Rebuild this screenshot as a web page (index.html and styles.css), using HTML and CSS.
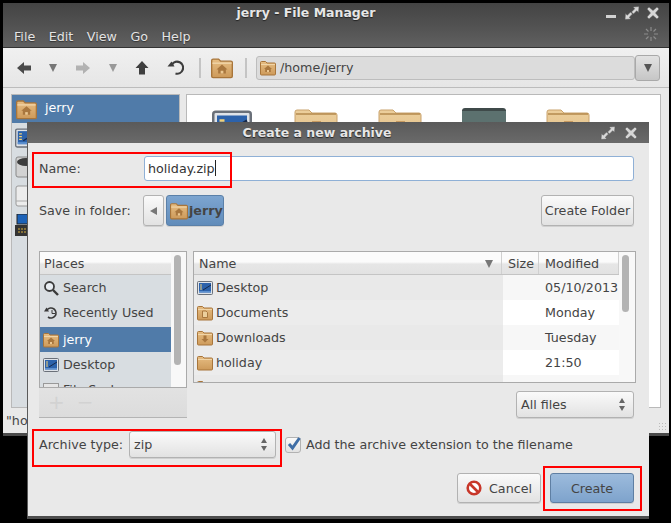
FILE: index.html
```html
<!DOCTYPE html>
<html lang="en">
<head>
    <meta charset="UTF-8">
    <meta name="viewport" content="width=device-width, initial-scale=1.0">
    <title>Create a new archive</title>
    <link rel="stylesheet" href="styles.css">
</head>
<body>
    <svg class="defs" width="0" height="0">
        <defs>
            <linearGradient id="tan" x1="0" y1="0" x2="0" y2="1">
                <stop offset="0" stop-color="#e6bd83"/>
                <stop offset="1" stop-color="#cd9a5a"/>
            </linearGradient>
            <linearGradient id="pale" x1="0" y1="0" x2="0" y2="1">
                <stop offset="0" stop-color="#eccf9c"/>
                <stop offset="1" stop-color="#e0bb84"/>
            </linearGradient>
            <symbol id="folder" viewBox="0 0 16 16">
                <path d="M.5 14V2.500q0-1 1-1h4l1.500 1.500h7.500q1 0 1 1V14q0 1-1 1h-13q-1 0-1-1z" fill="url(#tan)" stroke="#a8753a"/>
                <path d="M1 4.500h14" stroke="#f0d5a8"/>
            </symbol>
            <symbol id="folder-big" viewBox="0 0 44 40">
                <path d="M1 38V4q0-2 2-2h12l3 3h23q2 0 2 2v31q0 1-2 1H3q-2 0-2-1z" fill="url(#pale)" stroke="#c9a26c"/>
                <path d="M2 6h40" stroke="#b58a4e" stroke-width="1.500"/>
                <path d="M18 13h9v6h-9z" fill="#c79a60"/>
            </symbol>
            <symbol id="folder-home" viewBox="0 0 16 16">
                <use href="#folder"/>
                <path d="M8 5.500l4 3.500h-1.200v3H5.200V9H4z" fill="#a9773e"/>
                <path d="M7 10h2v2H7z" fill="#ecc892"/>
            </symbol>
            <symbol id="folder-doc" viewBox="0 0 16 16">
                <use href="#folder"/>
                <path d="M5.500 6h3.500l1.500 1.500V12.500h-5z" fill="#eccf9c" stroke="#a9773e"/>
            </symbol>
            <symbol id="folder-down" viewBox="0 0 16 16">
                <use href="#folder"/>
                <path d="M6.500 5.500h3V9H11.500L8 12.500 4.500 9h2z" fill="#a9773e"/>
            </symbol>
            <symbol id="desktop" viewBox="0 0 16 16">
                <rect x=".5" y="1.500" width="15" height="13" rx="1" fill="#dfe3e8" stroke="#6a7079"/>
                <rect x="2" y="3" width="12" height="9.500" fill="#2c62ab"/>
                <path d="M3 5h2M3 7h2M3 9h2" stroke="#f0d078"/>
                <path d="M6 10l8-5" stroke="#16294a"/>
                <path d="M2 11h12v1.500H2z" fill="#5b8fcf"/>
            </symbol>
            <symbol id="arrow" viewBox="0 0 16 16">
                <path d="M1 8l7-6v3.500h7v5H8V14z" fill="#4a4a4a"/>
            </symbol>
            <symbol id="expand" viewBox="0 0 16 14">
                <path d="M9 1l6-.500-.500 6-1.800-1.800L9.500 8 7.500 6l3.200-3.200zM7 13l-6 .500.500-6 1.800 1.800L6.500 6l2 2-3.200 3.200z" fill="#d8d8d8" stroke="#555" stroke-width=".5"/>
            </symbol>
            <symbol id="close" viewBox="0 0 14 14">
                <path d="M3 1l4 3.500L11 1l2 2-3.500 4L13 11l-2 2-4-3.500L3 13l-2-2 3.500-4L1 3z" fill="#d6d6d6" stroke="#555" stroke-width=".5"/>
            </symbol>
        </defs>
    </svg>

    <!-- file manager behind the dialog -->
    <div class="window main-window">
        <div class="titlebar main-title">
            <span class="title">jerry - File Manager</span>
            <div class="win-buttons">
                <span class="minimize"></span>
                <svg class="win-expand" width="16" height="14"><use href="#expand"/></svg>
                <svg class="win-close" width="14" height="14"><use href="#close"/></svg>
            </div>
        </div>
        <div class="menubar">
            <span>File</span><span>Edit</span><span>View</span><span>Go</span><span>Help</span>
            <svg class="spinner" width="14" height="14" viewBox="0 0 14 14"><path d="M7 0v4M7 10v4M0 7h4M10 7h4M2 2l2.500 2.500M9.500 9.500L12 12M12 2L9.500 4.500M4.500 9.500L2 12" stroke="#8c8c8c" stroke-width="1.200"/></svg>
        </div>
        <div class="toolbar">
            <svg class="tool-back" width="16" height="16"><use href="#arrow"/></svg>
            <span class="tri tool-drop1"></span>
            <svg class="tool-forward" width="16" height="16"><use href="#arrow"/></svg>
            <span class="tri tool-drop2"></span>
            <svg class="tool-up" width="14" height="16" viewBox="0 0 14 16"><path d="M7 1l6.500 7H10v6.500H4V8H.5z" fill="#3f3f3f"/></svg>
            <svg class="tool-reload" width="17" height="17" viewBox="0 0 17 17"><path d="M5 5.500A6 6 0 1 1 8.500 14.500" fill="none" stroke="#3d3d3d" stroke-width="2.200"/><path d="M0.500 7.500h7L4.500 2.500z" fill="#3d3d3d"/></svg>
            <span class="tool-sep sep-a"></span>
            <svg class="tool-home" width="22" height="22"><use href="#folder-home"/></svg>
            <span class="tool-sep sep-b"></span>
            <div class="path-entry">
                <svg width="16" height="16"><use href="#folder-home"/></svg>
                <span>/home/jerry</span>
            </div>
            <div class="path-drop"><span class="tri"></span></div>
        </div>
        <div class="panes">
            <div class="side-pane">
                <div class="side-selected">
                    <svg width="21" height="21"><use href="#folder-home"/></svg>
                    <span>jerry</span>
                </div>
                <div class="side-icons">
                    <svg width="22" height="22"><use href="#desktop"/></svg>
                    <svg width="22" height="22" viewBox="0 0 22 22"><rect x="1" y="1" width="20" height="20" rx="2" fill="#d2d2d2" stroke="#888"/><ellipse cx="11" cy="6" rx="9" ry="4" fill="#3c3c3c"/></svg>
                    <svg width="22" height="22" viewBox="0 0 22 22"><rect x="1" y="1" width="20" height="20" rx="2" fill="#ececec" stroke="#999"/><path d="M1 16h20" stroke="#aaa"/></svg>
                    <svg width="22" height="22" viewBox="0 0 22 22"><rect x="2" y="0" width="12" height="10" fill="#1c62b8" stroke="#222"/><rect x="0" y="11" width="22" height="11" fill="#333"/><path d="M3 15h10M3 18h10" stroke="#d8b040" stroke-dasharray="2 1"/></svg>
                </div>
            </div>
            <div class="icon-pane">
                <svg class="big-icon first" width="44" height="40"><use href="#desktop"/></svg>
                <svg class="big-icon" width="44" height="40"><use href="#folder-big"/></svg>
                <svg class="big-icon" width="44" height="40"><use href="#folder-big"/></svg>
                <span class="big-dark"></span>
                <svg class="big-icon" width="44" height="40"><use href="#folder-big"/></svg>
            </div>
        </div>
        <div class="statusbar">"holiday.zip"<span class="resize-grip"></span></div>
    </div>

    <!-- archive dialog -->
    <div class="window dialog">
        <div class="titlebar dialog-title">
            <span class="title">Create a new archive</span>
            <div class="win-buttons">
                <svg class="win-expand" width="16" height="14"><use href="#expand"/></svg>
                <svg class="win-close" width="14" height="14"><use href="#close"/></svg>
            </div>
        </div>
        <div class="dialog-body">
            <div class="name-row">
                <label class="name-label">Name:</label>
                <div class="name-entry">holiday.zip<span class="caret"></span></div>
            </div>
            <div class="folder-row">
                <span class="folder-label">Save in folder:</span>
                <button class="btn back-btn"><span class="tri-left"></span></button>
                <button class="btn crumb">
                    <svg width="18" height="18"><use href="#folder-home"/></svg>
                    <b>jerry</b>
                </button>
                <button class="btn create-folder">Create Folder</button>
            </div>

            <div class="browser">
                <div class="places-col">
                    <div class="places">
                        <div class="places-list">
                            <div class="col-head">Places</div>
                            <div class="place">
                                <svg width="16" height="16" viewBox="0 0 16 16"><circle cx="6.500" cy="6.500" r="4.500" fill="#e8edf2" stroke="#3a3a3a" stroke-width="1.800"/><path d="M10 10l5 5" stroke="#3a3a3a" stroke-width="2.400"/></svg>
                                <span>Search</span>
                            </div>
                            <div class="place">
                                <svg width="16" height="16" viewBox="0 0 16 16"><path d="M4 5a5 5 0 1 1 1 7" fill="none" stroke="#3a3a3a" stroke-width="1.600"/><path d="M1 6.500h5L3.500 2.500z" fill="#3a3a3a"/><path d="M9 5v3.500h3" fill="none" stroke="#3a3a3a"/></svg>
                                <span>Recently Used</span>
                            </div>
                            <div class="place place-on">
                                <svg width="16" height="16"><use href="#folder-home"/></svg>
                                <span>jerry</span>
                            </div>
                            <div class="place">
                                <svg width="16" height="16"><use href="#desktop"/></svg>
                                <span>Desktop</span>
                            </div>
                            <div class="place">
                                <span class="disk"></span>
                                <span>File System</span>
                            </div>
                        </div>
                        <div class="vscroll"><span class="thumb places-thumb"></span></div>
                    </div>
                    <div class="places-tools"><span>+</span><span>−</span></div>
                </div>
                <div class="grip"></div>
                <div class="files-col">
                    <div class="files">
                        <div class="file-table">
                            <div class="file-head">
                                <div class="fh-name">Name<span class="tri"></span></div>
                                <div class="fh-size">Size</div>
                                <div class="fh-mod">Modified</div>
                            </div>
                            <div class="file-row">
                                <div class="fc-name"><svg width="16" height="16"><use href="#desktop"/></svg>Desktop</div>
                                <div class="fc-size"></div>
                                <div class="fc-mod">05/10/2013</div>
                            </div>
                            <div class="file-row alt">
                                <div class="fc-name"><svg width="16" height="16"><use href="#folder-doc"/></svg>Documents</div>
                                <div class="fc-size"></div>
                                <div class="fc-mod">Monday</div>
                            </div>
                            <div class="file-row">
                                <div class="fc-name"><svg width="16" height="16"><use href="#folder-down"/></svg>Downloads</div>
                                <div class="fc-size"></div>
                                <div class="fc-mod">Tuesday</div>
                            </div>
                            <div class="file-row alt">
                                <div class="fc-name"><svg width="16" height="16"><use href="#folder"/></svg>holiday</div>
                                <div class="fc-size"></div>
                                <div class="fc-mod">21:50</div>
                            </div>
                            <div class="file-row">
                                <div class="fc-name"><svg width="16" height="16"><use href="#folder"/></svg>music</div>
                                <div class="fc-size"></div>
                                <div class="fc-mod"></div>
                            </div>
                        </div>
                        <div class="vscroll files-scroll"><span class="thumb files-thumb"></span></div>
                    </div>
                    <div class="filter-row">
                        <div class="combo filter-combo">All files<span class="spin"></span></div>
                    </div>
                </div>
            </div>

            <div class="type-row">
                <label class="type-label">Archive type:</label>
                <div class="combo type-combo">zip<span class="spin"></span></div>
                <span class="check">
                    <svg width="16" height="16" viewBox="0 0 16 16"><path d="M3 8l3.500 4L13.500 2" fill="none" stroke="#3f6ea6" stroke-width="3"/></svg>
                </span>
                <span class="check-text">Add the archive extension to the filename</span>
            </div>

            <div class="actions">
                <button class="btn action-btn">
                    <svg width="16" height="16" viewBox="0 0 16 16"><circle cx="8" cy="8" r="6.300" fill="#fff" stroke="#c8372a" stroke-width="2.600"/><path d="M3.500 3.500l9 9" stroke="#c8372a" stroke-width="2.600"/></svg>
                    Cancel
                </button>
                <button class="btn action-btn create-btn">Create</button>
            </div>
        </div>
    </div>

    <!-- red annotation boxes -->
    <div class="mark mark-name"></div>
    <div class="mark mark-type"></div>
    <div class="mark mark-create"></div>
</body>
</html>
```

FILE: styles.css
```css
html, body {
    margin: 0;
    padding: 0;
}
body {
    position: relative;
    width: 671px;
    height: 523px;
    overflow: hidden;
    background-color: #000;
    font-family: "DejaVu Sans", sans-serif;
    font-size: 12.7px;
    color: #444;
}
.defs {
    position: absolute;
}
svg {
    display: block;
    flex: none;
}
button {
    font-family: inherit;
    font-size: 12.7px;
    color: #444;
}

/* windows */
.window {
    position: absolute;
    box-sizing: border-box;
    background-color: #e9e9e9;
}
.main-window {
    left: 3px;
    top: 3px;
    width: 666px;
    height: 430px;
    box-shadow: 0 3px 0 #4a4a4a;
    border-radius: 3px 3px 0 0;
    display: flex;
    flex-direction: column;
}
.titlebar {
    position: relative;
    height: 22px;
    background: linear-gradient(#444, #515151);
    color: #e6e6e6;
    font-size: 12.5px;
    font-weight: bold;
    display: flex;
    align-items: center;
    justify-content: center;
    flex: none;
}
.main-title {
    box-sizing: border-box;
    padding-bottom: 4px;
}
.title {
    padding-right: 60px;
    text-shadow: 0 1px 1px #222;
}
.win-buttons {
    position: absolute;
    right: 9px;
    top: 3px;
    display: flex;
    align-items: center;
    gap: 6px;
}
.minimize {
    width: 10px;
    height: 3px;
    margin: 7px 2px 0 0;
    background-color: #d2d2d2;
}
.menubar {
    position: relative;
    height: 22px;
    background: linear-gradient(#515151, #606060);
    color: #e4e4e4;
    display: flex;
    align-items: center;
    padding-left: 11px;
    gap: 13.5px;
    flex: none;
    border-bottom: 1px solid #333;
    text-shadow: 0 1px 1px #333;
}
.spinner {
    position: absolute;
    right: 11px;
    top: 2px;
}
.toolbar {
    height: 39px;
    display: flex;
    align-items: center;
    flex: none;
    padding-left: 13px;
    background: linear-gradient(#f0f0f0, #e6e6e6);
    border-bottom: 1px solid #bcbcbc;
}
.tri {
    display: block;
    width: 0;
    height: 0;
    border-left: 4px solid transparent;
    border-right: 4px solid transparent;
    border-top: 8px solid #777;
}
.tool-drop1 { margin-left: 17px; }
.tool-forward { margin-left: 18px; opacity: .35; transform: scaleX(-1); }
.tool-drop2 { margin-left: 18px; border-top-color: #999; }
.tool-up { margin-left: 18px; }
.tool-reload { margin-left: 18px; }
.tool-sep {
    width: 2px;
    height: 20px;
    background-color: #c4c4c4;
}
.sep-a { margin-left: 15px; }
.tool-home { margin-left: 10px; }
.sep-b { margin-left: 12px; }
.path-entry {
    margin-left: 9px;
    width: 379px;
    height: 24px;
    box-sizing: border-box;
    border: 1px solid #bdbdbd;
    border-radius: 3px;
    background-color: #dcdcdc;
    display: flex;
    align-items: center;
    gap: 4px;
    padding-left: 3px;
}
.path-drop {
    width: 25px;
    height: 26px;
    box-sizing: border-box;
    border: 1px solid #a9a9a9;
    border-radius: 3px;
    background: linear-gradient(#e2e2e2, #c6c6c6);
    display: flex;
    align-items: center;
    justify-content: center;
}
.path-drop .tri {
    border-top-color: #555;
}
.panes {
    flex: 1;
    display: flex;
    gap: 6px;
    padding: 6px 8px 0 8px;
    min-height: 0;
}
.side-pane {
    width: 169px;
    background-color: #d8dde1;
    border: 1px solid #b9b9b9;
    box-sizing: border-box;
    position: relative;
}
.side-selected {
    height: 28px;
    background-color: #507ba9;
    color: #fff;
    display: flex;
    align-items: center;
    gap: 8px;
    padding-left: 4px;
}
.side-selected span {
    margin-bottom: 3px;
}
.side-icons {
    display: flex;
    flex-direction: column;
    gap: 7px;
    padding: 4px 0 0 3px;
}
.icon-pane {
    flex: 1;
    background-color: #fff;
    border: 1px solid #b9b9b9;
    display: flex;
    align-items: flex-start;
    padding-top: 13px;
    gap: 40px;
}
.big-icon.first { margin-left: 23px; }
.big-dark {
    width: 44px;
    height: 40px;
    border-radius: 3px;
    background-color: #5c716f;
    border-top: 3px solid #3f4a4a;
    box-sizing: border-box;
}
.statusbar {
    position: relative;
    height: 25px;
    line-height: 25px;
    padding-left: 3px;
    flex: none;
}
.resize-grip {
    position: absolute;
    right: 1px;
    bottom: 1px;
    width: 10px;
    height: 10px;
    background-image: radial-gradient(#bbb 1px, transparent 1px);
    background-size: 3px 3px;
}

/* dialog */
.dialog {
    left: 27px;
    top: 122px;
    width: 622px;
    height: 397px;
    border-left: 1px solid #5a5a5a;
    border-radius: 3px 3px 0 0;
    border-bottom: 3px solid #4d4d4d;
}
.dialog-title {
    height: 21px;
    margin-left: -1px;
    background: linear-gradient(#5a5a5a, #6a6a6a);
}
.dialog-title .title {
    padding-right: 42px;
}
.dialog-title .win-buttons {
    right: 11px;
    top: 4px;
    gap: 8px;
}
.dialog-body {
    padding: 13px 15px 0 11px;
}
.name-row {
    display: flex;
    align-items: center;
    height: 25px;
}
.name-label {
    width: 105px;
}
.name-entry {
    flex: 1;
    height: 25px;
    box-sizing: border-box;
    border: 1px solid #8fb0d6;
    border-radius: 3px;
    background-color: #fff;
    padding-left: 3px;
    line-height: 23px;
    color: #333;
}
.caret {
    display: inline-block;
    width: 1px;
    height: 16px;
    background-color: #222;
    vertical-align: -3px;
}
.folder-row {
    display: flex;
    align-items: center;
    margin-top: 14px;
    height: 31px;
}
.folder-label {
    width: 104px;
}
.btn {
    box-sizing: border-box;
    margin: 0;
    padding: 0;
    border: 1px solid #b2b2b2;
    border-radius: 3px;
    background: linear-gradient(#fafafa, #e2e2e2);
    box-shadow: 0 1px 0 #d0d0d0;
}
.back-btn {
    width: 21px;
    height: 31px;
    display: flex;
    align-items: center;
    justify-content: center;
}
.tri-left {
    width: 0;
    height: 0;
    border-top: 4px solid transparent;
    border-bottom: 4px solid transparent;
    border-right: 7px solid #777;
}
.crumb {
    width: 58px;
    height: 31px;
    margin-left: 2px;
    background: linear-gradient(#7da5d0, #618cba);
    border-color: #5b80a8;
    display: flex;
    align-items: center;
    padding-left: 3px;
    gap: 1px;
}
.create-folder {
    width: 93px;
    height: 31px;
    margin-left: auto;
}
.browser {
    display: flex;
    margin-top: 25px;
}
.places-col {
    width: 148px;
    flex: none;
}
.places {
    display: flex;
    height: 137px;
    box-sizing: border-box;
    border: 1px solid #aaa;
    overflow: hidden;
    background-color: #fff;
}
.places-list {
    width: 131px;
    background-color: #d8dde1;
    flex: none;
}
.col-head {
    height: 23px;
    line-height: 23px;
    padding-left: 4px;
    background: linear-gradient(#fbfbfb 45%, #e6e6e6 55%, #e2e2e2);
    border-bottom: 1px solid #c4c4c4;
    box-sizing: border-box;
}
.place {
    height: 25px;
    display: flex;
    align-items: center;
    gap: 4px;
    padding-left: 3px;
}
.place:nth-child(3) {
    margin-bottom: 2px;
}
.place-on {
    background-color: #507ba9;
    color: #fff;
}
.disk {
    width: 16px;
    height: 14px;
    background-color: #e6e6e6;
    border: 1px solid #999;
    box-sizing: border-box;
}
.vscroll {
    flex: 1;
    background-color: #f8f8f8;
    position: relative;
}
.thumb {
    position: absolute;
    left: 3px;
    width: 7px;
    border-radius: 4px;
    background-color: #b3b3b3;
}
.places-thumb {
    top: 3px;
    height: 110px;
}
.places-tools {
    height: 30px;
    box-sizing: border-box;
    background: linear-gradient(#e2e2e2, #dcdcdc);
    border-bottom: 1px solid #b4b4b4;
    color: #d2d2d2;
    display: flex;
    gap: 12px;
    padding: 0 0 2px 9px;
    align-items: center;
    font-size: 20px;
}
.grip {
    width: 6px;
    flex: none;
}
.files-col {
    flex: 1;
    min-width: 0;
}
.files {
    display: flex;
    height: 132px;
    width: 443px;
    box-sizing: border-box;
    border: 1px solid #aaa;
    overflow: hidden;
    background-color: #fff;
}
.file-table {
    width: 425px;
    flex: none;
}
.file-head {
    display: flex;
    height: 23px;
    line-height: 23px;
    box-sizing: border-box;
    background: linear-gradient(#fbfbfb 45%, #e6e6e6 55%, #e2e2e2);
    border-bottom: 1px solid #c4c4c4;
}
.fh-name {
    width: 308px;
    padding-left: 5px;
    box-sizing: border-box;
    position: relative;
    border-right: 1px solid #d0d0d0;
}
.fh-name .tri {
    position: absolute;
    right: 8px;
    top: 8px;
}
.fh-size {
    width: 37px;
    padding-left: 6px;
    box-sizing: border-box;
    border-right: 1px solid #d0d0d0;
}
.fh-mod {
    flex: 1;
    padding-left: 6px;
    border-right: 1px solid #d0d0d0;
}
.file-row {
    display: flex;
    height: 25px;
    align-items: center;
    background-color: #f7f7f7;
}
.file-row.alt {
    background-color: #fff;
}
.fc-name {
    width: 309px;
    height: 100%;
    box-sizing: border-box;
    display: flex;
    align-items: center;
    gap: 3px;
    padding-left: 3px;
    background-color: #e9e9e9;
}
.file-row.alt .fc-name {
    background-color: #ececec;
}
.fc-size {
    width: 36px;
}
.fc-mod {
    flex: 1;
    padding-left: 6px;
}
.files-scroll .files-thumb {
    top: 3px;
    height: 57px;
}
.filter-row {
    display: flex;
    justify-content: flex-end;
    margin-top: 8px;
}
.combo {
    position: relative;
    box-sizing: border-box;
    height: 27px;
    line-height: 25px;
    border: 1px solid #b2b2b2;
    border-radius: 3px;
    background: linear-gradient(#fafafa, #e2e2e2);
    padding-left: 4px;
    box-shadow: 0 1px 0 #d0d0d0;
}
.spin {
    position: absolute;
    right: 8px;
    top: 6px;
    width: 0;
    height: 0;
    border-left: 3px solid transparent;
    border-right: 3px solid transparent;
    border-bottom: 5px solid #666;
}
.spin::after {
    content: "";
    position: absolute;
    left: -3px;
    top: 8px;
    width: 0;
    height: 0;
    border-left: 3px solid transparent;
    border-right: 3px solid transparent;
    border-top: 5px solid #666;
}
.filter-combo {
    width: 118px;
}
.type-row {
    display: flex;
    align-items: center;
    margin-top: 13px;
    height: 27px;
}
.type-label {
    width: 90px;
}
.type-combo {
    width: 147px;
}
.check {
    width: 16px;
    height: 16px;
    margin-left: 9px;
    box-sizing: border-box;
    border: 1px solid #b2b2b2;
    border-radius: 3px;
    background: linear-gradient(#fafafa, #e2e2e2);
    display: flex;
    align-items: center;
    justify-content: center;
}
.check svg {
    margin: -2px 0 0 1px;
}
.check-text {
    margin-left: 5px;
}
.actions {
    display: flex;
    justify-content: flex-end;
    gap: 9px;
    margin-top: 15px;
}
.action-btn {
    width: 84px;
    height: 30px;
    display: flex;
    align-items: center;
    justify-content: center;
    gap: 7px;
}
.create-btn {
    background: linear-gradient(#9cbbdc, #7ea3cc);
    border-color: #5f7fa3;
}

/* annotations */
.mark {
    position: absolute;
    box-sizing: border-box;
    border: 2px solid #f00;
}
.mark-name {
    left: 32px;
    top: 152px;
    width: 200px;
    height: 36px;
}
.mark-type {
    left: 32px;
    top: 429px;
    width: 250px;
    height: 38px;
}
.mark-create {
    left: 543px;
    top: 466px;
    width: 99px;
    height: 45px;
}
```
